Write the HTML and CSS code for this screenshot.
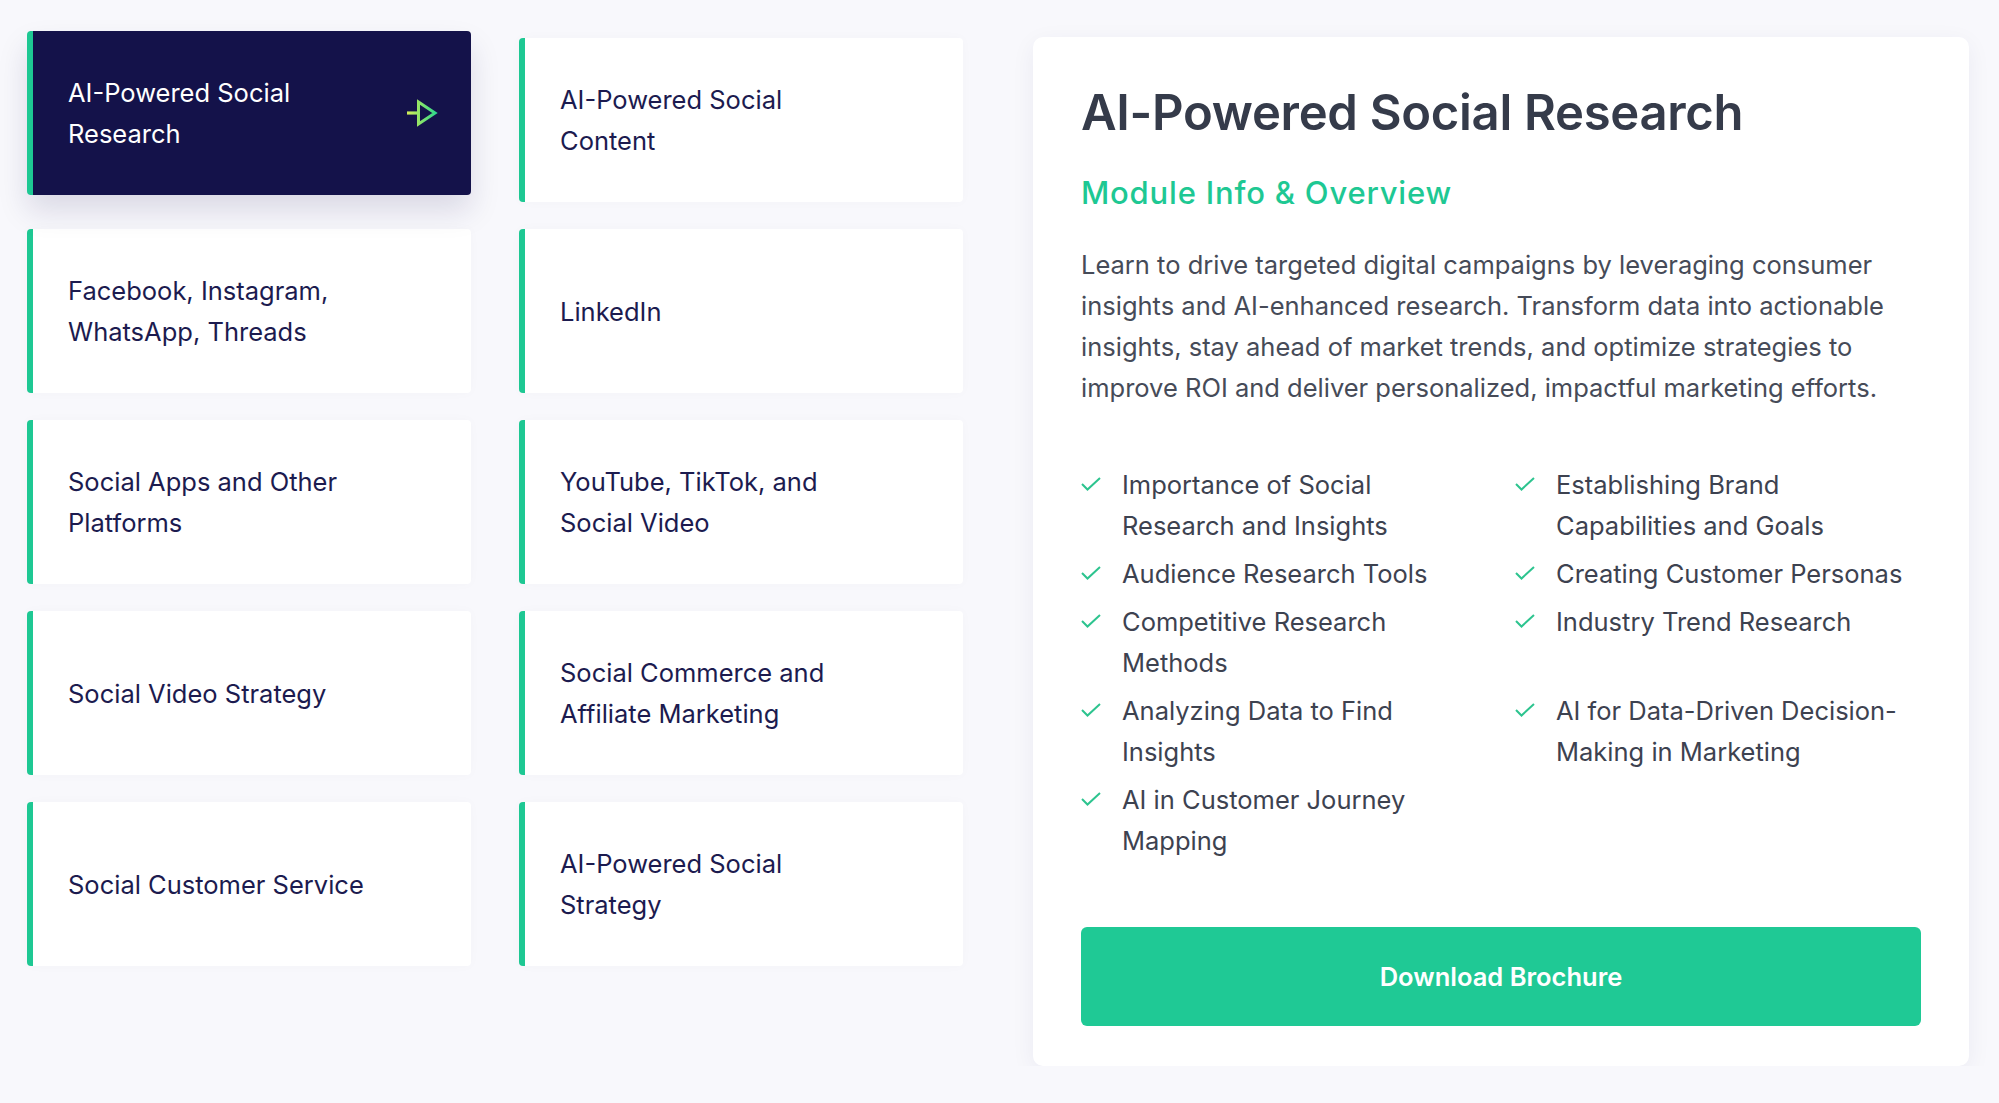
FILE: index.html
```html
<!DOCTYPE html>
<html lang="en">
<head>
<meta charset="utf-8">
<title>Modules</title>
<link rel="stylesheet" href="styles.css">
</head>
<body>
<div class="page">
  <div class="modules">
    <div class="module active">
      <span class="label">AI-Powered Social Research</span>
      <svg class="arrow" width="32" height="28" viewBox="0 0 32 28" aria-hidden="true">
        <defs>
          <linearGradient id="arrowGrad" gradientUnits="userSpaceOnUse" x1="0" y1="14" x2="30" y2="14">
            <stop offset="0" stop-color="#d9ef57"/>
            <stop offset="0.45" stop-color="#8fe468"/>
            <stop offset="1" stop-color="#2fd98c"/>
          </linearGradient>
        </defs>
        <line x1="1" y1="14" x2="12" y2="14" stroke="url(#arrowGrad)" stroke-width="3.2"/>
        <polygon points="12.5,3 29,14 12.5,25" fill="none" stroke="url(#arrowGrad)" stroke-width="3" stroke-linejoin="miter"/>
      </svg>
    </div>
    <div class="module"><span class="label">AI-Powered Social Content</span></div>
    <div class="module"><span class="label">Facebook, Instagram, WhatsApp, Threads</span></div>
    <div class="module"><span class="label">LinkedIn</span></div>
    <div class="module"><span class="label">Social Apps and Other Platforms</span></div>
    <div class="module"><span class="label">YouTube, TikTok, and Social Video</span></div>
    <div class="module"><span class="label">Social Video Strategy</span></div>
    <div class="module"><span class="label">Social Commerce and Affiliate Marketing</span></div>
    <div class="module"><span class="label">Social Customer Service</span></div>
    <div class="module"><span class="label">AI-Powered Social Strategy</span></div>
  </div>

  <div class="panel">
    <h2 class="title">AI-Powered Social Research</h2>
    <h3 class="subtitle">Module Info &amp; Overview</h3>
    <p class="desc">Learn to drive targeted digital campaigns by leveraging consumer insights and AI-enhanced research. Transform data into actionable insights, stay ahead of market trends, and optimize strategies to improve ROI and deliver personalized, impactful marketing efforts.</p>
    <ul class="topics">
      <li><svg class="check" viewBox="0 0 20 14" aria-hidden="true"><path d="M1 7 L6.5 12.5 L19 1"/></svg><span>Importance of Social Research and Insights</span></li>
      <li><svg class="check" viewBox="0 0 20 14" aria-hidden="true"><path d="M1 7 L6.5 12.5 L19 1"/></svg><span>Establishing Brand Capabilities and Goals</span></li>
      <li><svg class="check" viewBox="0 0 20 14" aria-hidden="true"><path d="M1 7 L6.5 12.5 L19 1"/></svg><span>Audience Research Tools</span></li>
      <li><svg class="check" viewBox="0 0 20 14" aria-hidden="true"><path d="M1 7 L6.5 12.5 L19 1"/></svg><span>Creating Customer Personas</span></li>
      <li><svg class="check" viewBox="0 0 20 14" aria-hidden="true"><path d="M1 7 L6.5 12.5 L19 1"/></svg><span>Competitive Research Methods</span></li>
      <li><svg class="check" viewBox="0 0 20 14" aria-hidden="true"><path d="M1 7 L6.5 12.5 L19 1"/></svg><span>Industry Trend Research</span></li>
      <li><svg class="check" viewBox="0 0 20 14" aria-hidden="true"><path d="M1 7 L6.5 12.5 L19 1"/></svg><span>Analyzing Data to Find Insights</span></li>
      <li><svg class="check" viewBox="0 0 20 14" aria-hidden="true"><path d="M1 7 L6.5 12.5 L19 1"/></svg><span>AI for Data-Driven Decision-Making in Marketing</span></li>
      <li><svg class="check" viewBox="0 0 20 14" aria-hidden="true"><path d="M1 7 L6.5 12.5 L19 1"/></svg><span>AI in Customer Journey Mapping</span></li>
    </ul>
    <button class="download" type="button">Download Brochure</button>
  </div>
</div>
</body>
</html>
```

FILE: styles.css
```css
* { box-sizing: border-box; }

html, body {
  margin: 0;
  padding: 0;
  background: #f8f8fc;
}

body {
  font-family: Inter, "Liberation Sans", Arial, sans-serif;
  -webkit-font-smoothing: antialiased;
}

.page {
  display: flex;
  align-items: flex-start;
  gap: 70px;
  padding: 37px 30px 0 27px;
}

.modules {
  flex: 0 0 936px;
  display: grid;
  grid-template-columns: 1fr 1fr;
  grid-auto-rows: 164px;
  column-gap: 48px;
  row-gap: 27px;
  margin-top: 1px;
}

.module {
  display: flex;
  align-items: center;
  justify-content: space-between;
  background: #ffffff;
  border-left: 6px solid #1ec893;
  border-radius: 4px;
  padding: 0 30px 0 35px;
  box-shadow: 0 0 12px rgba(30, 30, 80, 0.025);
}

.module .label {
  max-width: 318px;
  font-size: 25.5px;
  line-height: 41px;
  font-weight: 400;
  color: #1c1b4f;
}

.module.active {
  background: #14124a;
  transform: translateY(-7px);
  box-shadow: 0 16px 30px rgba(20, 18, 74, 0.13);
}

.module.active .label {
  color: #ffffff;
}

.arrow {
  flex: 0 0 auto;
  margin-right: 3px;
}

.panel {
  flex: 0 0 936px;
  background: #ffffff;
  border-radius: 10px;
  padding: 48px 48px 40px;
  box-shadow: 0 6px 24px rgba(30, 30, 80, 0.06);
}

.title {
  margin: 0;
  font-size: 49px;
  line-height: 56px;
  font-weight: 600;
  color: #353b4a;
  letter-spacing: -0.3px;
}

.subtitle {
  margin: 34px 0 0;
  font-size: 31px;
  line-height: 36px;
  font-weight: 500;
  color: #1ec893;
  letter-spacing: 0.8px;
}

.desc {
  margin: 33px 0 0;
  font-size: 25.5px;
  line-height: 41px;
  color: #464b58;
}

.topics {
  list-style: none;
  margin: 56px 0 0;
  padding: 0;
  display: grid;
  grid-template-columns: 1fr 1fr;
  column-gap: 28px;
  row-gap: 7px;
}

.topics li {
  display: flex;
  align-items: flex-start;
  gap: 21px;
  font-size: 25.5px;
  line-height: 41px;
  color: #3d4250;
}

.topics li span {
  max-width: 360px;
}

.check {
  flex: 0 0 20px;
  width: 20px;
  height: 14px;
  margin-top: 13px;
  fill: none;
  stroke: #2dc48f;
  stroke-width: 2;
}

.download {
  display: block;
  width: 100%;
  height: 99px;
  margin-top: 66px;
  border: 0;
  border-radius: 6px;
  background: #1fc995;
  color: #ffffff;
  font-family: inherit;
  font-size: 25.5px;
  font-weight: 600;
  cursor: pointer;
}
```
